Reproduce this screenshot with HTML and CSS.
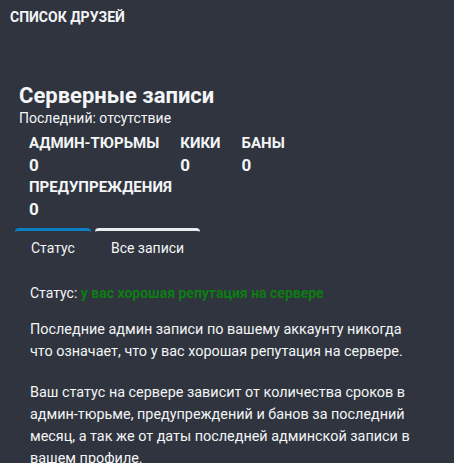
FILE: index.html
```html
<!DOCTYPE html>
<html lang="ru">
<head>
<meta charset="utf-8">
<title>Серверные записи</title>
<link rel="stylesheet" href="styles.css">
</head>
<body>
<div class="topbar">СПИСОК ДРУЗЕЙ</div>
<section class="records">
  <h1 class="records-title">Серверные записи</h1>
  <div class="records-last">Последний: отсутствие</div>
  <div class="stats">
    <div class="stat"><div class="stat-label">АДМИН-ТЮРЬМЫ</div><div class="stat-value">0</div></div>
    <div class="stat"><div class="stat-label">КИКИ</div><div class="stat-value">0</div></div>
    <div class="stat"><div class="stat-label">БАНЫ</div><div class="stat-value">0</div></div>
    <div class="stat"><div class="stat-label">ПРЕДУПРЕЖДЕНИЯ</div><div class="stat-value">0</div></div>
  </div>
  <div class="tabs">
    <div class="tab tab-active">Статус</div>
    <div class="tab">Все записи</div>
  </div>
  <div class="tab-body">
    <p class="status-line">Статус: <span class="status-good">у вас хорошая репутация на сервере</span></p>
    <p class="text">Последние админ записи по вашему аккаунту никогда что означает, что у вас хорошая репутация на сервере.</p>
    <p class="text">Ваш статус на сервере зависит от количества сроков в админ-тюрьме, предупреждений и банов за последний месяц, а так же от даты последней админской записи в вашем профиле.</p>
  </div>
</section>
</body>
</html>
```
FILE: styles.css
```css
html, body {
  margin: 0;
  background: #2f343e;
  color: #f4f5f7;
  font-family: Roboto, "Noto Sans", sans-serif;
}

.topbar {
  height: 74px;
  padding: 9px 10px 0;
  font-size: 14px;
  font-weight: 700;
  line-height: 16px;
}

.records {
  padding-left: 15px;
}

.records-title {
  margin: 0 0 0 4px;
  font-size: 22px;
  font-weight: 700;
  line-height: 26px;
}

.records-last {
  margin: 1px 0 0 4px;
  font-size: 14px;
  line-height: 16px;
}

/* counters wrap onto a second row */
.stats {
  display: flex;
  flex-wrap: wrap;
  column-gap: 21px;
  width: 380px;
  margin: 7px 0 0 14px;
}

.stat-label {
  font-size: 15px;
  font-weight: 700;
  line-height: 20px;
}

.stat-value {
  font-size: 17px;
  font-weight: 700;
  line-height: 24px;
}

.tabs {
  display: flex;
  gap: 4px;
  margin-top: 7px;
}

.tab {
  padding: 9px 16px 0;
  border-top: 3px solid #e9ebef;
  border-radius: 4px 4px 0 0;
  font-size: 14px;
  line-height: 16px;
}

.tab-active {
  border-top-color: #0a7fc4;
}

.tab-body {
  width: 383px;
  padding: 29px 0 0 15px;
}

.tab-body p {
  margin: 0;
}

.status-line {
  font-size: 14px;
  line-height: 16px;
}

.status-good {
  color: #0d7c14;
  font-weight: 700;
}

.text {
  font-size: 14.4px;
  line-height: 22px;
}

.status-line + .text {
  margin-top: 18px;
}

.text + .text {
  margin-top: 19px;
}
```
